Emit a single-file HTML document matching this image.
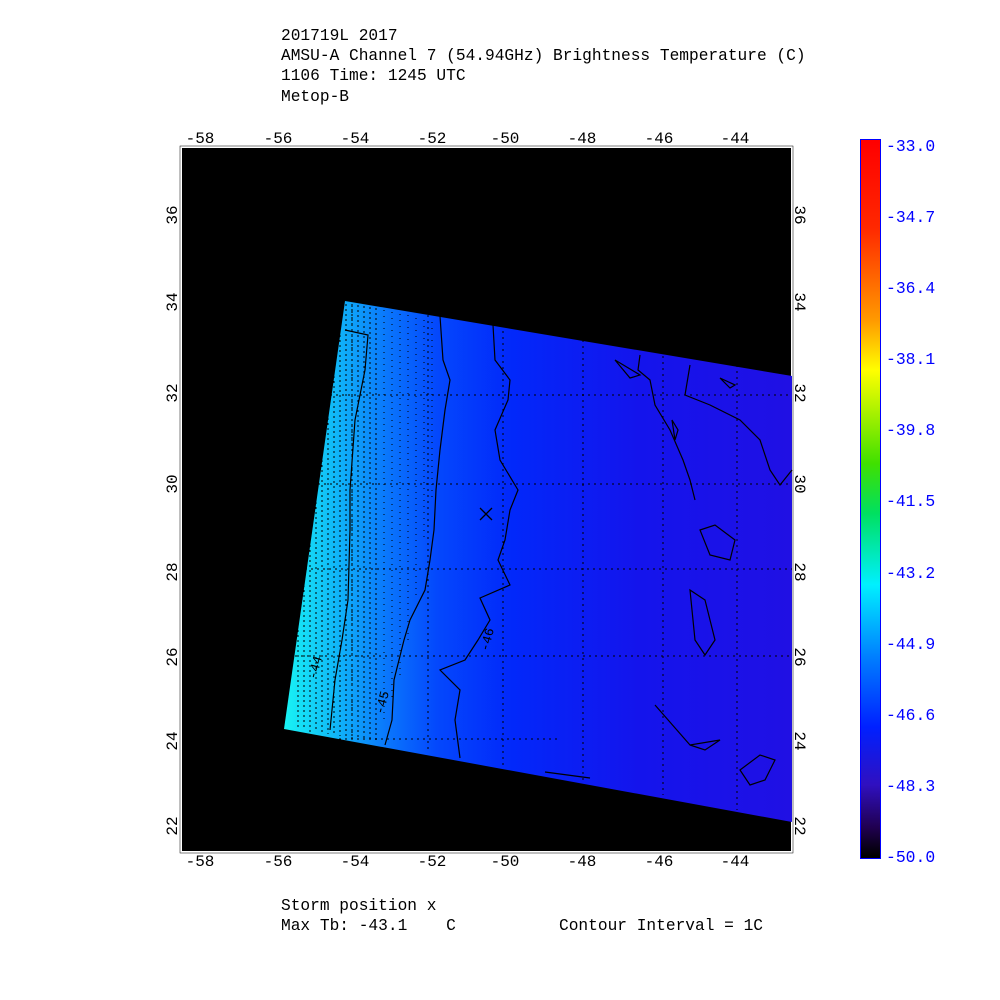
<!DOCTYPE html>
<html><head><meta charset="utf-8"><style>
html,body{margin:0;padding:0;background:#fff;}
svg{display:block;font-family:"Liberation Mono","DejaVu Sans Mono",monospace;}
text{white-space:pre;}
</style></head><body>
<svg width="1000" height="1000" viewBox="0 0 1000 1000" xmlns="http://www.w3.org/2000/svg">
<defs>
<linearGradient id="sw" x1="284" y1="0" x2="792" y2="0" gradientUnits="userSpaceOnUse">
<stop offset="0" stop-color="#18f4f4"/>
<stop offset="0.1" stop-color="#10b8f8"/>
<stop offset="0.2" stop-color="#0a78fc"/>
<stop offset="0.3" stop-color="#0448fc"/>
<stop offset="0.45" stop-color="#0228fa"/>
<stop offset="0.7" stop-color="#1414ec"/>
<stop offset="1" stop-color="#2010e4"/>
</linearGradient>
<linearGradient id="cb" x1="0" y1="142" x2="0" y2="856" gradientUnits="userSpaceOnUse">
<stop offset="0" stop-color="#ff0000"/>
<stop offset="0.12" stop-color="#ff2800"/>
<stop offset="0.25" stop-color="#ff9a00"/>
<stop offset="0.32" stop-color="#ffff00"/>
<stop offset="0.45" stop-color="#40e000"/>
<stop offset="0.52" stop-color="#00e060"/>
<stop offset="0.62" stop-color="#00f0ff"/>
<stop offset="0.72" stop-color="#0080ff"/>
<stop offset="0.82" stop-color="#0020ff"/>
<stop offset="0.9" stop-color="#3010c0"/>
<stop offset="0.96" stop-color="#200050"/>
<stop offset="1" stop-color="#000000"/>
</linearGradient>
</defs>
<g font-size="16.2" fill="#000">
<text x="281" y="40">201719L 2017</text>
<text x="281" y="60">AMSU-A Channel 7 (54.94GHz) Brightness Temperature (C)</text>
<text x="281" y="80">1106 Time: 1245 UTC</text>
<text x="281" y="101">Metop-B</text>
<text x="281" y="910">Storm position x</text>
<text x="281" y="930">Max Tb: -43.1    C</text>
<text x="559" y="930">Contour Interval = 1C</text>
</g>
<rect x="180" y="146" width="613" height="707" fill="#fff" stroke="#000" stroke-width="0.5"/>
<rect x="182" y="148" width="609" height="703" fill="#000"/>
<path d="M345,301 L792,376 L792,822 L284,729 Z" fill="url(#sw)"/>
<g stroke="#000" stroke-width="1" stroke-dasharray="2 3">
<path d="M298,340 L298,730 M304,320 L304,730 M310,315 L310,732 M316,312 L316,732 M322,310 L322,733 M328,308 L328,734 M334,306 L334,735 M340,305 L340,736 M346,304 L346,737 M352,304 L352,738 M358,305 L358,738 M364,306 L364,740 M370,307 L370,740 M376,308 L376,740"/>
</g>
<g stroke="#000" stroke-width="1" stroke-dasharray="1 5">
<path d="M384,310 L384,720 M392,312 L392,700 M400,314 L400,680 M408,315 L408,640 M416,318 L416,600 M424,320 L424,540 M432,322 L432,500"/>
</g>
<g stroke="#000" stroke-width="1" stroke-dasharray="2 4">
<path d="M352,305 V740 M428,315 V750 M503,325 V765 M583,340 V780 M663,350 V795 M737,365 V810"/>
<path d="M330,395 H792 M318,484 H792 M305,569 H792 M295,656 H792 M285,739 H560"/>
</g>
<g stroke="#000" stroke-width="1.2" fill="none">
<path d="M345,330 L368,335 L365,370 L355,420 L350,490 L350,530 L348,600 L342,640 L335,680 L330,730"/>
<path d="M440,316 L443,360 L450,380 L445,410 L440,450 L436,490 L434,530 L430,560 L425,590 L410,620 L404,640 L394,680 L392,720 L385,745"/>
<path d="M493,325 L495,360 L510,380 L508,400 L495,430 L500,460 L518,490 L510,510 L505,540 L498,560 L510,585 L480,598 L490,620 L478,640 L465,660 L440,670 L460,690 L455,720 L460,758"/>
<path d="M640,355 L638,370 L650,380 L655,405 L670,430 L683,460 L690,480 L695,500"/>
<path d="M690,365 L685,395 L710,405 L740,420 L760,440 L770,470 L780,485 L792,470"/>
<path d="M700,530 L715,525 L735,540 L730,560 L710,555 Z"/>
<path d="M690,590 L705,600 L715,640 L705,655 L695,640 Z"/>
<path d="M655,705 L690,745 L720,740 L705,750 L690,745"/>
<path d="M740,770 L760,755 L775,760 L765,780 L750,785 Z"/>
<path d="M615,360 L640,375 L630,378 Z"/>
<path d="M720,378 L735,385 L730,388 Z"/>
<path d="M672,420 L678,430 L675,440 Z"/>
<path d="M545,772 L590,778"/>
</g>
<g font-size="13" fill="#000">
<text transform="translate(383,715) rotate(-75)">-45</text>
<text transform="translate(488,652) rotate(-75)">-46</text>
<text transform="translate(316,680) rotate(-75)">-44</text>
</g>
<path d="M480,508 L492,520 M492,508 L480,520" stroke="#000" stroke-width="1.3"/>
<g font-size="16" fill="#000" text-anchor="middle">
<text x="200" y="143">-58</text><text x="278" y="143">-56</text><text x="355" y="143">-54</text><text x="432" y="143">-52</text>
<text x="505" y="143">-50</text><text x="582" y="143">-48</text><text x="659" y="143">-46</text><text x="735" y="143">-44</text>
<text x="200" y="866">-58</text><text x="278" y="866">-56</text><text x="355" y="866">-54</text><text x="432" y="866">-52</text>
<text x="505" y="866">-50</text><text x="582" y="866">-48</text><text x="659" y="866">-46</text><text x="735" y="866">-44</text>
</g>
<g font-size="16" fill="#000" text-anchor="middle">
<text transform="translate(177,215) rotate(-90)">36</text>
<text transform="translate(177,302) rotate(-90)">34</text>
<text transform="translate(177,393) rotate(-90)">32</text>
<text transform="translate(177,484) rotate(-90)">30</text>
<text transform="translate(177,572) rotate(-90)">28</text>
<text transform="translate(177,657) rotate(-90)">26</text>
<text transform="translate(177,741) rotate(-90)">24</text>
<text transform="translate(177,826) rotate(-90)">22</text>
<text transform="translate(795,215) rotate(90)">36</text>
<text transform="translate(795,302) rotate(90)">34</text>
<text transform="translate(795,393) rotate(90)">32</text>
<text transform="translate(795,484) rotate(90)">30</text>
<text transform="translate(795,572) rotate(90)">28</text>
<text transform="translate(795,657) rotate(90)">26</text>
<text transform="translate(795,741) rotate(90)">24</text>
<text transform="translate(795,826) rotate(90)">22</text>
</g>
<rect x="860.5" y="139.5" width="20" height="719" fill="url(#cb)" stroke="#0000ff" stroke-width="1"/>
<g font-size="16.4" fill="#0000ff">
<text x="886" y="151">-33.0</text>
<text x="886" y="222">-34.7</text>
<text x="886" y="293">-36.4</text>
<text x="886" y="364">-38.1</text>
<text x="886" y="435">-39.8</text>
<text x="886" y="506">-41.5</text>
<text x="886" y="578">-43.2</text>
<text x="886" y="649">-44.9</text>
<text x="886" y="720">-46.6</text>
<text x="886" y="791">-48.3</text>
<text x="886" y="862">-50.0</text>
</g>
</svg>
</body></html>
